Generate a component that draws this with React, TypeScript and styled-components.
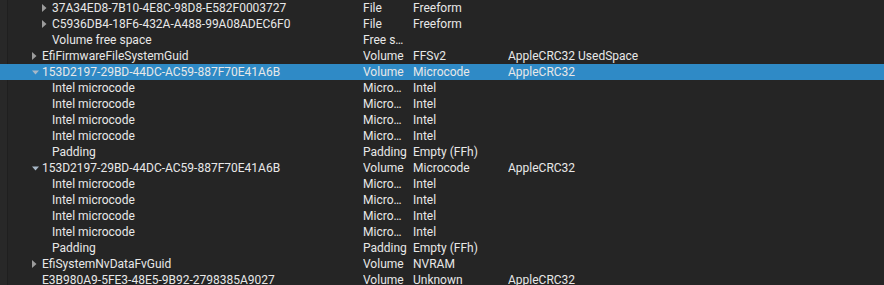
import React from "react";
import styled, { createGlobalStyle } from "styled-components";

type Node = {
  name: string;
  depth: number;
  arrow?: "right" | "down";
  type: string;
  subtype?: string;
  text?: string;
  selected?: boolean;
};

const micro = (): Node => ({ name: "Intel microcode", depth: 3, type: "Micro…", subtype: "Intel" });
const padding = (): Node => ({ name: "Padding", depth: 3, type: "Padding", subtype: "Empty (FFh)" });

const rows: Node[] = [
  { name: "37A34ED8-7B10-4E8C-98D8-E582F0003727", depth: 3, arrow: "right", type: "File", subtype: "Freeform" },
  { name: "C5936DB4-18F6-432A-A488-99A08ADEC6F0", depth: 3, arrow: "right", type: "File", subtype: "Freeform" },
  { name: "Volume free space", depth: 3, type: "Free s…" },
  { name: "EfiFirmwareFileSystemGuid", depth: 2, arrow: "right", type: "Volume", subtype: "FFSv2", text: "AppleCRC32 UsedSpace" },
  { name: "153D2197-29BD-44DC-AC59-887F70E41A6B", depth: 2, arrow: "down", type: "Volume", subtype: "Microcode", text: "AppleCRC32", selected: true },
  micro(), micro(), micro(), micro(), padding(),
  { name: "153D2197-29BD-44DC-AC59-887F70E41A6B", depth: 2, arrow: "down", type: "Volume", subtype: "Microcode", text: "AppleCRC32" },
  micro(), micro(), micro(), micro(), padding(),
  { name: "EfiSystemNvDataFvGuid", depth: 2, arrow: "right", type: "Volume", subtype: "NVRAM" },
  { name: "E3B980A9-5FE3-48E5-9B92-2798385A9027", depth: 2, type: "Volume", subtype: "Unknown", text: "AppleCRC32" },
];

const GlobalStyle = createGlobalStyle`
  html, body {
    margin: 0;
    padding: 0;
    background: #252525;
    overflow: hidden;
  }
`;

const TreeView = styled.div`
  width: 884px;
  height: 285px;
  position: relative;
  background: #252525;
  font-family: Roboto, "Noto Sans", sans-serif;
  font-size: 12px;
  color: #e8e8e8;
  overflow: hidden;
`;

/* thin branch gutter line on the far left, drawn behind the rows */
const Gutter = styled.div`
  position: absolute;
  left: 0;
  top: 0;
  bottom: 0;
  width: 7px;
  background: #282828;
  border-right: 1px solid #1f1f1f;
`;

const Body = styled.div`
  display: flex;
  flex-direction: column;
`;

const Row = styled.div<{ $selected?: boolean }>`
  display: grid;
  grid-template-columns: 363px 50px 95px 1fr;
  height: 16px;
  line-height: 16px;
  flex-shrink: 0;
  background: ${(p) => (p.$selected ? "#2f8ac6" : "transparent")};
  position: relative;
  z-index: 1;
`;

const NameCell = styled.div<{ $depth: number }>`
  display: flex;
  align-items: center;
  padding-left: ${(p) => p.$depth * 10 + 10}px;
  white-space: nowrap;
  overflow: hidden;
`;

const ArrowBox = styled.span`
  width: 10px;
  height: 16px;
  flex-shrink: 0;
  display: flex;
  align-items: center;
  padding-left: 2px;
  box-sizing: border-box;
`;

const Cell = styled.div`
  white-space: nowrap;
  overflow: hidden;
`;

const NameText = styled.span`
  margin-left: 2px;
`;

const Arrow = ({ dir }: { dir: "right" | "down" }) =>
  dir === "right" ? (
    <svg width="5" height="8" viewBox="0 0 5 8">
      <path d="M0 0 L4.5 4 L0 8 Z" fill="#9c9c9c" />
    </svg>
  ) : (
    <svg width="7" height="5" viewBox="0 0 7 5">
      <path d="M0 0.5 L7 0.5 L3.5 4.5 Z" fill="#a8b8c8" />
    </svg>
  );

export default function App() {
  return (
    <>
      <GlobalStyle />
      <TreeView>
        <Gutter />
        <Body>
          {rows.map((r, i) => (
            <Row key={i} $selected={r.selected}>
              <NameCell $depth={r.depth}>
                <ArrowBox>{r.arrow && <Arrow dir={r.arrow} />}</ArrowBox>
                <NameText>{r.name}</NameText>
              </NameCell>
              <Cell>{r.type}</Cell>
              <Cell>{r.subtype}</Cell>
              <Cell>{r.text}</Cell>
            </Row>
          ))}
        </Body>
      </TreeView>
    </>
  );
}
